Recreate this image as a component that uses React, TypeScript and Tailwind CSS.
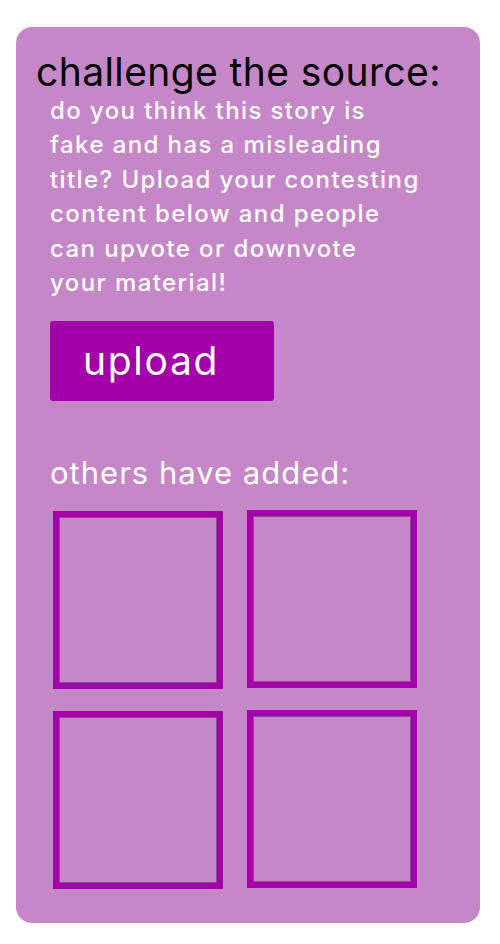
import React from 'react';

const Box = ({ className = '' }: { className?: string }) => (
    <div
        className={`w-[170px] h-[178px] border-[6px] border-[#a400aa] shadow-[inset_0_0_0_1px_#8e4a92] ${className}`}
    />
);

export default function App() {
    return (
        <div className="w-[500px] h-[944px] bg-white pt-[27px] pl-4" style={{ fontFamily: 'Inter, "Noto Sans", sans-serif' }}>
            <div className="w-[464px] h-[896px] rounded-2xl bg-[#c687c8] pt-[20px]">
                <h1 className="pl-[20px] text-[39px] leading-[50px] text-black tracking-[0.4px]">
                    challenge the source:
                </h1>
                <p className="pl-[34px] mt-[-3px] text-[24px] leading-[34.4px] font-medium text-white tracking-[1.4px]">
                    do you think this story is
                    <br />
                    fake and has a misleading
                    <br />
                    title? Upload your contesting
                    <br />
                    content below and people
                    <br />
                    can upvote or downvote
                    <br />
                    your material!
                </p>
                <button className="ml-[34px] mt-[21px] w-[224px] h-[80px] rounded-[3px] bg-[#a400aa] text-left pl-[33px] text-[39px] text-white tracking-[1.7px]">
                    upload
                </button>
                <div className="pl-[34px] mt-[52px] text-[31px] leading-[40px] text-white tracking-[1px]">
                    others have added:
                </div>
                <div className="ml-[37px] mt-[17px] grid grid-cols-[170px_170px] gap-x-[24px] gap-y-[21px]">
                    <Box className="mt-[1px]" />
                    <Box />
                    <Box className="mt-[1px]" />
                    <Box />
                </div>
            </div>
        </div>
    );
}
